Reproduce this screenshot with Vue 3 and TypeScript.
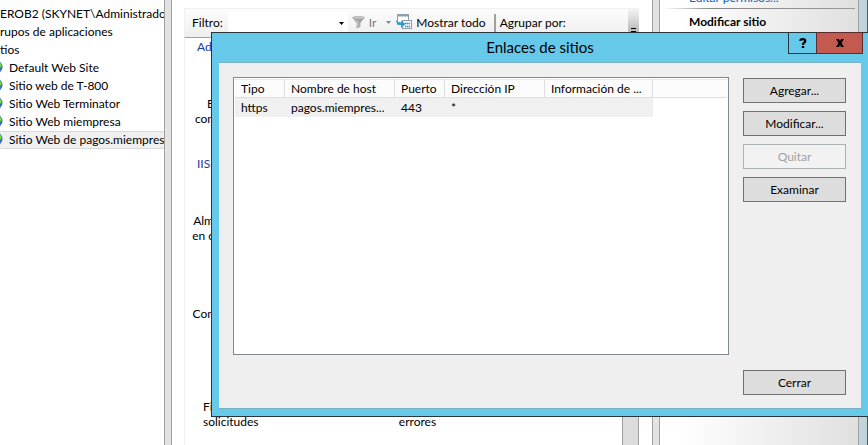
<script setup lang="ts">
interface Site {
  name: string
  selected?: boolean
}
interface Feature {
  lines: string[]
  place: string
}
interface FeatureRow {
  heading?: string
  size: 'short' | 'tall'
  items: Feature[]
}
interface Binding {
  type: string
  host: string
  port: string
  address: string
  info: string
}

const branches: string[] = ['EROB2 (SKYNET\\Administrador)', 'rupos de aplicaciones', 'tios']
const sites: Site[] = [
  { name: 'Default Web Site' },
  { name: 'Sitio web de T-800' },
  { name: 'Sitio Web Terminator' },
  { name: 'Sitio Web miempresa' },
  { name: 'Sitio Web de pagos.miempres', selected: true },
]
const rows: FeatureRow[] = [
  { heading: 'Ad', size: 'short', items: [{ lines: ['E', 'con'], place: 'edge' }] },
  { heading: 'IIS', size: 'short', items: [{ lines: ['Alm', 'en c'], place: 'edge' }] },
  { size: 'tall', items: [{ lines: ['Con', ''], place: 'edge' }] },
  {
    size: 'tall',
    items: [
      { lines: ['Fi', 'solicitudes'], place: 'first' },
      { lines: ['errores'], place: 'third' },
    ],
  },
]
const headers: string[] = ['Tipo', 'Nombre de host', 'Puerto', 'Dirección IP', 'Información de ...']
const bindings: Binding[] = [{ type: 'https', host: 'pagos.miempres...', port: '443', address: '*', info: '' }]
</script>

<template>
  <main class="manager">
    <nav class="tree" aria-label="Conexiones">
      <ul>
        <li v-for="branch in branches" :key="branch" class="branch">{{ branch }}</li>
        <li v-for="site in sites" :key="site.name" class="site" :class="{ selected: site.selected }">
          <svg class="globe" viewBox="0 0 14 14" aria-hidden="true">
            <circle cx="7" cy="7" r="6.500" fill="#2f62b5" />
            <path d="M5 1 Q10 0 12.400 4 L13 7 L10 9 L8 7 L5 6Z" fill="#4fc02c" />
            <path d="M8 3 L11 3 L12 6 L10 7Z" fill="#a3e66a" />
            <path d="M8 10 L12 9 L10 12 L8 13Z" fill="#6f9cd4" />
          </svg>
          <span>{{ site.name }}</span>
        </li>
      </ul>
    </nav>
    <div class="splitter"></div>

    <section class="center">
      <div class="toolbar">
        <label for="filter">Filtro:</label>
        <div class="combo">
          <input id="filter" type="text" />
          <svg class="arrow" viewBox="0 0 5 3" aria-hidden="true"><path d="M0 0H5L2.500 3Z" fill="#000" /></svg>
        </div>
        <button type="button" class="tool go">
          <svg class="funnel" viewBox="0 0 16 14" aria-hidden="true">
            <path d="M1 2 Q8 -1 15 2 L10 8 V12 L6 14 V8Z" fill="#a4a4a4" />
            <ellipse cx="8" cy="2.200" rx="6" ry="1.400" fill="#c4c4c4" />
            <path d="M7.500 7 V12 M5 5 L7 7" stroke="#d4d4d4" />
          </svg>
          <span>Ir</span>
          <svg class="arrow" viewBox="0 0 5 3" aria-hidden="true"><path d="M0 0H5L2.500 3Z" fill="#888" /></svg>
        </button>
        <button type="button" class="tool">
          <svg class="showall" viewBox="0 0 17 16" aria-hidden="true">
            <rect x="1.500" y="0.500" width="11" height="10" fill="#fff" stroke="#91a0aa" />
            <path d="M1 1.500H13" stroke="#91a0aa" stroke-width="2" />
            <rect x="6.500" y="6.500" width="9" height="8" fill="#f4f8fc" stroke="#8b9cad" />
            <path d="M9 9.500H14M9 12.500H14" stroke="#5f7fa8" stroke-width="1.500" stroke-dasharray="1.500 0.500" />
            <path d="M0 6 Q0 11 5 11 V14 L9.500 10 L5 6.500 V8.500 Q2 8.500 0 6Z" fill="#2d9bd8" />
          </svg>
          <span>Mostrar todo</span>
        </button>
        <span class="divider"></span>
        <span class="group-by">Agrupar por:</span>
        <button type="button" class="overflow" aria-label="Más opciones">
          <svg viewBox="0 0 5 4" aria-hidden="true"><path d="M0 0.500H5M0 3.500H5" stroke="#000" /></svg>
        </button>
      </div>
      <div class="features">
        <div class="feature-list">
          <template v-for="(row, index) in rows" :key="index">
            <h3 v-if="row.heading">{{ row.heading }}</h3>
            <div class="feature-row" :class="row.size">
              <p v-for="item in row.items" :key="item.lines[0]" :class="item.place">
                <span v-for="line in item.lines" :key="line">{{ line }}</span>
              </p>
            </div>
          </template>
        </div>
        <div class="scrollbar"></div>
      </div>
    </section>

    <div class="splitter"></div>
    <aside class="actions">
      <a href="#">Editar permisos...</a>
      <hr />
      <h2>Modificar sitio</h2>
    </aside>
    <div class="frame"></div>

    <div class="dialog" role="dialog" aria-labelledby="dialog-title">
      <header>
        <h1 id="dialog-title">Enlaces de sitios</h1>
        <div class="caption">
          <button type="button" class="help" aria-label="Ayuda">
            <svg viewBox="0 0 8 10" aria-hidden="true">
              <path d="M1 2.800 Q1.500 1.100 3.800 1.100 Q6.300 1.100 6.300 3 Q6.300 4.200 5 4.800 Q4 5.300 4 7" fill="none" stroke="#000" stroke-width="2.200" />
              <rect x="2.800" y="8" width="2.400" height="2" />
            </svg>
          </button>
          <button type="button" class="close" aria-label="Cerrar ventana">
            <svg viewBox="0 0 8 8" aria-hidden="true"><path d="M0 0H3L4 2L5 0H8L5.500 4L8 8H5L4 6L3 8H0L2.500 4Z" /></svg>
          </button>
        </div>
      </header>
      <div class="body">
        <div class="list">
          <table>
            <colgroup>
              <col class="w-type" /><col class="w-host" /><col class="w-port" /><col class="w-ip" /><col class="w-info" /><col />
            </colgroup>
            <thead>
              <tr>
                <th v-for="header in headers" :key="header" scope="col">{{ header }}</th>
                <td></td>
              </tr>
            </thead>
            <tbody>
              <tr v-for="binding in bindings" :key="binding.host">
                <td>{{ binding.type }}</td>
                <td>{{ binding.host }}</td>
                <td>{{ binding.port }}</td>
                <td>{{ binding.address }}</td>
                <td>{{ binding.info }}</td>
                <td></td>
              </tr>
            </tbody>
          </table>
        </div>
        <div class="buttons">
          <button type="button">Agregar...</button>
          <button type="button">Modificar...</button>
          <button type="button" disabled>Quitar</button>
          <button type="button" class="focused">Examinar</button>
          <button type="button" class="last">Cerrar</button>
        </div>
      </div>
    </div>
  </main>
</template>

<style>
body {
  overflow: hidden;
  background: #fff;
}
</style>

<style scoped>
.manager {
  position: relative;
  display: flex;
  height: 100vh;
  overflow: hidden;
  font: 12px/15px Lato, "Open Sans", sans-serif;
  color: #000;
}
* {
  box-sizing: border-box;
}
h1, h2, h3, p, ul {
  margin: 0;
  padding: 0;
  font-size: 12px;
  font-weight: 400;
}
button, input {
  font: inherit;
  color: inherit;
  padding: 0;
  border-radius: 0;
}
.tree {
  flex: 0 0 164px;
  overflow: hidden;
  padding-top: 5px;
}
.tree ul {
  list-style: none;
}
.tree li {
  display: flex;
  align-items: center;
  height: 18px;
  padding-bottom: 2px;
  white-space: nowrap;
}
.globe {
  flex: none;
  width: 14px;
  height: 14px;
  margin: 0 6px 0 -11px;
}
.tree .selected {
  background: #f0f0f0;
  box-shadow: inset 0 1px #d9d9d9, inset 0 -1px #d9d9d9;
}
.splitter {
  flex: 0 0 8px;
  background: #e3e3e3;
  border: solid #a0a0a0;
  border-width: 0 1px;
}
.center {
  flex: 1;
  min-width: 0;
  display: flex;
  flex-direction: column;
  padding: 8px 13px 0 12px;
}
.toolbar {
  display: flex;
  align-items: center;
  flex: 0 0 30px;
  padding-left: 7px;
  background: linear-gradient(#fcfcfc, #eee);
  border: solid #f0f0f0;
  border-width: 1px 0 0 1px;
  border-bottom: 1px solid #a0a0a0;
  white-space: nowrap;
}
.toolbar label, .tool, .group-by {
  padding-bottom: 2px;
}
.combo {
  display: flex;
  align-items: center;
  width: 120px;
  height: 22px;
  margin: 0 3px 0 5px;
  padding-right: 4px;
  background: #fff;
}
.combo input {
  flex: 1;
  min-width: 0;
  border: 0;
  outline: 0;
  background: none;
}
.arrow {
  width: 5px;
  height: 3px;
}
.tool {
  display: flex;
  align-items: center;
  gap: 3px;
  border: 0;
  background: none;
}
.go {
  color: #777;
  margin-right: 5px;
}
.go .arrow {
  margin-left: 7px;
}
.funnel {
  width: 15px;
  height: 14px;
}
.showall {
  width: 17px;
  height: 16px;
}
.divider {
  width: 2px;
  height: 18px;
  margin: 0 4px 0 8px;
  background: #a0a0a0;
}
.overflow {
  align-self: stretch;
  width: 11px;
  margin-left: auto;
  border: 0;
  background: linear-gradient(#f4f4f4, #aaa);
}
.overflow svg {
  display: block;
  width: 5px;
  height: 4px;
  margin: 14px auto 0;
}
.features {
  flex: 1;
  min-height: 0;
  display: flex;
  border-left: 1px solid #f0f0f0;
}
.feature-list {
  flex: 1;
  min-width: 0;
  overflow: hidden;
}
h3 {
  padding: 1px 0 0 12px;
  height: 17px;
  color: #1e3aa0;
}
.feature-row {
  display: grid;
  grid-template-columns: repeat(4, 93px);
  align-items: end;
}
.short {
  height: 71px;
}
.tall {
  height: 93px;
}
.feature-row + h3 {
  height: 46px;
  padding-top: 30px;
}
.feature-row p {
  display: flex;
  flex-direction: column;
}
.feature-row span {
  min-height: 15px;
}
.edge {
  align-items: flex-end;
  width: 29px;
}
.first {
  padding-left: 18px;
}
.third {
  grid-column: 3;
  align-items: center;
}
.scrollbar {
  width: 17px;
  background: #dcdcdc;
  border: solid #a0a0a0;
  border-width: 0 1px;
}
.actions {
  flex: 0 0 199px;
  overflow: hidden;
  background: linear-gradient(90deg, #fff 10%, #e0e0e0);
  border-right: 1px solid #a0a0a0;
}
.actions a {
  display: block;
  height: 10px;
  margin-top: -2px;
  padding-left: 29px;
  line-height: 0;
  color: #0066cc;
  text-decoration: none;
}
.actions hr {
  height: 1px;
  margin: 0 3px 5px;
  border: 0;
  background: linear-gradient(90deg, #fff, #888 25%, #999);
}
.actions h2 {
  padding-left: 29px;
  font-weight: 700;
}
.frame {
  flex: 0 0 9px;
  background: #c0d4dc;
  border-right: 1px solid #555;
}
.dialog {
  position: absolute;
  top: 32px;
  left: 211px;
  right: 0;
  padding: 0 7px 7px;
  background: #66c9ea;
  border: solid #27343a;
  border-width: 1px 0 1px 1px;
}
.dialog header {
  position: relative;
  height: 29px;
}
.dialog h1 {
  font-size: 15px;
  line-height: 29px;
  text-align: center;
}
.caption {
  position: absolute;
  top: -1px;
  right: -2px;
  display: flex;
}
.caption button {
  display: flex;
  align-items: center;
  justify-content: center;
  width: 29px;
  height: 22px;
  border: 1px solid #27343a;
  background: #66c9ea;
}
.caption .close {
  width: 47px;
  margin-left: -1px;
  border-color: #5b2b2b;
  background: #c35a50;
}
.help svg {
  width: 8px;
  height: 10px;
}
.close svg {
  width: 8px;
  height: 8px;
}
.body {
  display: flex;
  gap: 14px;
  padding: 14px 15px 13px 14px;
  background: #efefef;
  border: solid #7cb0c4;
  border-width: 1px 0;
}
.list {
  flex: 1;
  min-width: 0;
  height: 278px;
  margin-bottom: 40px;
  padding: 1px;
  background: #fff;
  border: 1px solid #828790;
}
table {
  width: 100%;
  table-layout: fixed;
  border-collapse: separate;
  border-spacing: 0;
}
.w-type { width: 50px; }
.w-host { width: 110px; }
.w-port { width: 50px; }
.w-ip { width: 100px; }
.w-info { width: 108px; }
th, td {
  height: 19px;
  padding: 0 0 0 6px;
  text-align: left;
  font-weight: 400;
  white-space: nowrap;
}
th {
  border-right: 1px solid #dedede;
}
thead th, thead td {
  border-top: 1px solid #e8e8e8;
  border-bottom: 1px solid #dedede;
  background: #fcfcfc;
}
tbody td {
  background: #f0f0f0;
}
tbody td:last-child {
  background: none;
}
.buttons {
  display: flex;
  flex-direction: column;
  gap: 8px;
  width: 103px;
  padding-top: 1px;
}
.buttons button {
  height: 25px;
  background: #ddd;
  border: 1px solid #707070;
}
.buttons button:disabled {
  color: #a0a0a0;
  background: #f2f2f2;
  border-color: #adb2b5;
}
.buttons button.focused {
  border-color: #3c7fb1;
}
.buttons .last {
  margin-top: auto;
}
</style>
